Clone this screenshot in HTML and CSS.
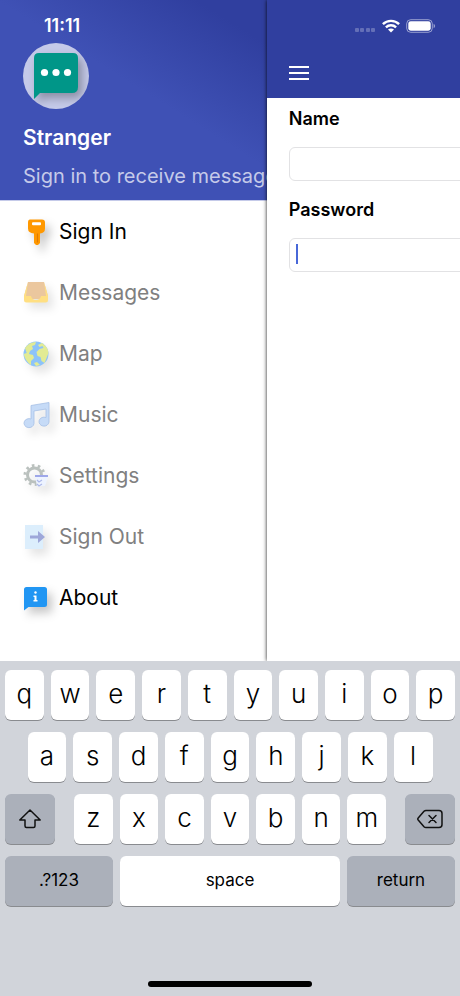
FILE: index.html
```html
<!DOCTYPE html>
<html lang="en">
<head>
  <meta charset="UTF-8">
  <meta name="viewport" content="width=device-width, initial-scale=1">

  <title>Sign In</title>

  <link rel="stylesheet" href="styles.css">
</head>
<body>
  <div class="status-bar">
    <span class="time">11:11</span>
    <div class="status-icons">
      <svg class="signal" width="22" height="6" viewBox="0 0 22 6">
        <rect x="1" y="1" width="4" height="4" rx="1"/>
        <rect x="6" y="1" width="4" height="4" rx="1"/>
        <rect x="12" y="1" width="4" height="4" rx="1"/>
        <rect x="17" y="1" width="4" height="4" rx="1"/>
      </svg>
      <svg width="18" height="14" viewBox="0 0 18 14" fill="none" stroke="#fff" stroke-width="2.4">
        <path d="M.9 5.2C5.4 .7 12.6 .7 17.1 5.2"/>
        <path d="M3.9 8.3c2.9-2.8 7.3-2.8 10.2 0"/>
        <path d="M9 13.6 6 10.6c1.7-1.5 4.3-1.5 6 0z" fill="#fff" stroke="none"/>
      </svg>
      <svg width="30" height="14" viewBox="0 0 30 14">
        <rect x=".7" y=".7" width="25.6" height="12.6" rx="4" fill="none" stroke="#fff" stroke-opacity=".5"/>
        <rect x="2.3" y="2.3" width="22.4" height="9.4" rx="2.4" fill="#fff"/>
        <path d="M27.6 4.8c2 .8 2 3.6 0 4.4z" fill="#fff" fill-opacity=".5"/>
      </svg>
    </div>
  </div>

  <div class="app">
    <nav class="drawer">
      <header class="profile">
        <div class="avatar">
          <svg width="46" height="48" viewBox="0 0 46 48">
            <path d="M6 1h34q5 0 5 5v29q0 6-6 6H7l-6 6V6q0-5 5-5z" fill="#009688"/>
            <circle cx="11.500" cy="20.500" r="3.600" fill="#fff"/>
            <circle cx="23" cy="20.500" r="3.600" fill="#fff"/>
            <circle cx="34.500" cy="20.500" r="3.600" fill="#fff"/>
          </svg>
        </div>
        <h2>Stranger</h2>
        <p>Sign in to receive messages</p>
      </header>

      <a class="item" href="#signin">
        <svg class="icon" viewBox="0 0 26 26">
          <path d="M7 .5h12q3 0 3 3v6q0 4.500-5 5V24l-2 2h-2l-2-2V14.500q-6-.5-6-5v-6q0-3 2-3z" fill="#ff9800"/>
          <rect x="9" y="3.200" width="9" height="3" rx="1" fill="#fff"/>
          <path d="M14.500 14.500v9" stroke="#e07b00" stroke-width="1.200"/>
        </svg>
        Sign In
      </a>
      <a class="item off" href="#messages">
        <svg class="icon" viewBox="0 0 26 26">
          <path d="M5 2h16l4 14-6 3H7l-6-3z" fill="#d8903f"/>
          <path d="M5 2 1 16v4q0 2.500 2.500 2.500h19q2.500 0 2.500-2.500v-4L21 2l2 14h-5q-1 4-5 4t-5-4H3z" fill="#ffc107"/>
        </svg>
        Messages
      </a>
      <a class="item off" href="#map">
        <svg class="icon" viewBox="0 0 26 26">
          <circle cx="13" cy="13" r="12.500" fill="#1e88f5"/>
          <path d="M2 7q4-6 11-6l-1 3-3 1 1 3-3 2-1 3 4 1 1 3-3 3v4Q2 20 .7 13l3-1z" fill="#c6d92c"/>
          <path d="m15 4 4-2q6 4 6.500 10l-2 5-2 5-3-2-1-4-3-1-1-4 3-3 4-1-1-2-3 1z" fill="#c6d92c"/>
          <path d="m11 22 3-1 3 3-4 1z" fill="#c6d92c"/>
        </svg>
        Map
      </a>
      <a class="item off" href="#music">
        <svg class="icon" viewBox="0 0 26 26">
          <path d="M8 3.500 26 .5V20a5 4.500 0 1 1-3-4.500V7L11 9v12.500a5 4.500 0 1 1-3-4.500z" fill="#8fb8f0" stroke="#4f82cc" stroke-width=".8"/>
        </svg>
        Music
      </a>
      <a class="item off" href="#settings">
        <svg class="icon" viewBox="0 0 26 26">
          <circle cx="11.500" cy="12" r="7" fill="none" stroke="#78847f" stroke-width="3"/>
          <circle cx="11.500" cy="12" r="9.500" fill="none" stroke="#78847f" stroke-width="3" stroke-dasharray="2.600 3.369"/>
          <path d="M12 14h13l-3 9h-8z" fill="#dce9ff"/>
          <path d="M12 13h13" stroke="#3f51d5" stroke-width="2"/>
          <path d="m14 17 2 2 3-2M14 21l2 2 3-2" fill="none" stroke="#5c73d6" stroke-width="1.200"/>
        </svg>
        Settings
      </a>
      <a class="item off" href="#signout">
        <svg class="icon" viewBox="0 0 26 26">
          <path d="M2 1h18v24H2z" fill="#bbdefb"/>
          <path d="M7 11.500h8V7l7 6-7 6v-4.500H7z" fill="#3f51b5"/>
        </svg>
        Sign Out
      </a>
      <a class="item" href="#about">
        <svg class="icon" viewBox="0 0 26 26">
          <path d="M3.500 2h18q2.500 0 2.500 2.500v15q0 2.500-2.500 2.500H5.500L1 25.500v-21Q1 2 3.500 2z" fill="#2196f3"/>
          <circle cx="12.500" cy="7.500" r="1.200" fill="#fff"/>
          <path d="M10.500 10.500h3V15h1v1.500h-4V15h1v-3h-1z" fill="#fff"/>
        </svg>
        About
      </a>
    </nav>

    <main class="page">
      <header class="toolbar">
        <button class="menu" type="button" aria-label="Menu">
          <svg width="20" height="16" viewBox="0 0 20 16" stroke="#fff" stroke-width="2">
            <path d="M0 2h20M0 8h20M0 14h20"/>
          </svg>
        </button>
      </header>
      <form class="form">
        <label for="name">Name</label>
        <div class="field">
          <input id="name" type="text">
        </div>
        <label for="password">Password</label>
        <div class="field active">
          <input id="password" type="password">
        </div>
      </form>
    </main>
  </div>

  <div class="keyboard">
    <div class="row">
      <button>q</button>
      <button>w</button>
      <button>e</button>
      <button>r</button>
      <button>t</button>
      <button>y</button>
      <button>u</button>
      <button>i</button>
      <button>o</button>
      <button>p</button>
    </div>
    <div class="row middle">
      <button>a</button>
      <button>s</button>
      <button>d</button>
      <button>f</button>
      <button>g</button>
      <button>h</button>
      <button>j</button>
      <button>k</button>
      <button>l</button>
    </div>
    <div class="row shift-row">
      <button class="dark" aria-label="Shift">
        <svg width="24" height="22" viewBox="0 0 24 22" fill="none" stroke="#111" stroke-width="1.500" stroke-linejoin="round">
          <path d="M12 2 1.800 12H7v6q0 1.500 1.500 1.500h7q1.500 0 1.500-1.500v-6h5.200z"/>
        </svg>
      </button>
      <div class="row letters">
        <button>z</button>
        <button>x</button>
        <button>c</button>
        <button>v</button>
        <button>b</button>
        <button>n</button>
        <button>m</button>
      </div>
      <button class="dark" aria-label="Delete">
        <svg width="26" height="20" viewBox="0 0 26 20" fill="none" stroke="#111" stroke-width="1.500" stroke-linejoin="round" stroke-linecap="round">
          <path d="M9 1.500h13q3 0 3 3v11q0 3-3 3H9q-1.200 0-2-.8L1.200 11q-.8-1 0-2L7 2.300q.8-.8 2-.8z"/>
          <path d="m12 6.500 7 7m0-7-7 7"/>
        </svg>
      </button>
    </div>
    <div class="row bottom">
      <button class="dark word">.?123</button>
      <button class="word">space</button>
      <button class="dark word">return</button>
    </div>
    <div class="home-bar"></div>
  </div>
</body>
</html>
```

FILE: styles.css
```css
* {
  box-sizing: border-box;
}

body {
  font-family: Inter, sans-serif;
  margin: 0;
  min-height: 100vh;
  display: flex;
  flex-direction: column;
  background: #fff;
  color: #000;
  overflow-x: hidden;
}

/* sits over the drawer and the page */
.status-bar {
  position: absolute;
  top: 0;
  left: 0;
  right: 0;
  z-index: 2;
  height: 51px;
  padding: 0 24px 0 44px;
  display: flex;
  align-items: center;
  justify-content: space-between;
  color: #fff;
}

.time {
  font-size: 18px;
  font-weight: 600;
}

.status-icons {
  display: flex;
  align-items: center;
  gap: 6px;
}

.signal {
  fill: rgba(255, 255, 255, 0.25);
  align-self: flex-end;
}

.app {
  flex: 1;
  display: flex;
  overflow: hidden;
}

.drawer {
  width: 58%;
  flex-shrink: 0;
  overflow: hidden;
}

.profile {
  height: 201px;
  padding: 43px 0 0 23px;
  border-bottom: 1px solid #c5cae9;
  background: linear-gradient(212deg, #303f9f 0%, #303f9f 12%, #3f51b5 46%);
  color: #fff;
  white-space: nowrap;
}

.avatar {
  width: 66px;
  height: 66px;
  border-radius: 50%;
  background: #c5cae9;
  display: flex;
  align-items: center;
  justify-content: center;
  overflow: hidden;
}

.avatar svg {
  filter: drop-shadow(4px 5px 5px rgba(0, 0, 0, 0.3));
}

.profile h2 {
  margin: 15px 0 0;
  font-size: 21px;
  line-height: 28px;
  font-weight: 600;
}

.profile p {
  margin: 10px 0 0;
  font-size: 20px;
  line-height: 28px;
  color: #c5cae9;
}

.item {
  height: 61px;
  padding-left: 23px;
  display: flex;
  align-items: center;
  gap: 10px;
  font-size: 21px;
  color: #000;
  text-decoration: none;
}

.icon {
  width: 26px;
  height: 26px;
  overflow: visible;
  filter: drop-shadow(5px 6px 5px rgba(0, 0, 0, 0.22));
}

.off {
  color: #808080;
}

.off .icon {
  opacity: 0.5;
}

/* full size page, pushed aside by the open drawer */
.page {
  width: 100vw;
  flex-shrink: 0;
  z-index: 1;
  background: #fff;
  box-shadow: 0 0 4px rgba(0, 0, 0, 0.9);
}

.toolbar {
  height: 98px;
  padding: 0 0 13px 22px;
  display: flex;
  align-items: flex-end;
  background: #303f9f;
}

.menu {
  height: 24px;
  padding: 0;
  border: 0;
  background: none;
  display: flex;
  align-items: center;
}

.form {
  padding: 0 22px;
}

.form label {
  display: block;
  padding-top: 9px;
  font-size: 18px;
  line-height: 24px;
  font-weight: 600;
}

.field {
  position: relative;
  padding: 16px 0 8px;
}

.field input {
  display: block;
  width: 100%;
  height: 34px;
  padding: 0 8px;
  border: 1px solid #e2e2e4;
  border-radius: 6px;
  background: #fff;
  font: inherit;
}

/* text cursor */
.active::after {
  content: "";
  position: absolute;
  left: 7px;
  top: 22px;
  width: 2px;
  height: 20px;
  background: #4868d8;
}

.keyboard {
  height: 335px;
  padding: 9px 5px;
  display: flex;
  flex-direction: column;
  gap: 12px;
  background: #d1d4da;
}

.row {
  display: flex;
  gap: 7px;
}

.row button {
  flex: 1;
  min-width: 0;
  height: 50px;
  padding: 0 0 4px;
  border: 0;
  border-radius: 6px;
  background: #fff;
  box-shadow: 0 1px 0 #898b8f;
  color: #000;
  font-family: inherit;
  font-size: 26px;
  font-weight: 300;
  display: flex;
  align-items: center;
  justify-content: center;
}

.middle {
  padding: 0 5%;
}

.shift-row {
  gap: 19px;
}

.letters {
  flex: 1;
}

.row .dark {
  background: #abb0ba;
}

.shift-row > .dark {
  flex: 0 0 50px;
  padding: 0;
}

.bottom {
  display: grid;
  grid-template-columns: 27fr 55fr 27fr;
}

.row .word {
  padding: 0 0 2px;
  font-size: 17px;
  font-weight: 400;
}

.home-bar {
  width: 164px;
  height: 6px;
  margin: auto auto 0;
  border-radius: 3px;
  background: #000;
}
```
